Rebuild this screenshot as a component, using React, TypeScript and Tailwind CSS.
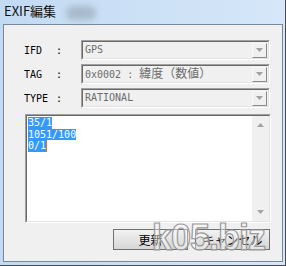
const mono = "font-['DejaVu_Sans_Mono','Noto_Sans_CJK_JP',monospace]";

function Combo({ children }: { children: React.ReactNode }) {
  return (
    <div className="flex h-[20px] w-[189px] border border-t-[#a0a0a0] border-l-[#a0a0a0] border-r-white border-b-white">
      <div className="flex flex-1 items-center border border-t-[#696969] border-l-[#696969] border-r-[#e3e3e3] border-b-[#e3e3e3] bg-[#f0f0f0] pl-[2px] pr-[1px]">
        <span className={`flex-1 text-[10px] leading-none text-[#6d6d6d] ${mono}`}>{children}</span>
        <div className="flex h-[15px] w-[15px] items-center justify-center border border-t-[#f8f8f8] border-l-[#f8f8f8] border-r-[#8a8a8a] border-b-[#8a8a8a] bg-[#f0f0f0]">
          <svg width="7" height="4" viewBox="0 0 7 4">
            <path d="M0 0h7L3.5 4z" fill="#a0a0a0" />
          </svg>
        </div>
      </div>
    </div>
  );
}

function Row({ label, children }: { label: string; children: React.ReactNode }) {
  return (
    <div className="flex h-[20px] items-center">
      <span className={`w-[33px] pl-[1px] text-[10px] text-black ${mono}`}>{label}</span>
      <span className={`w-[25px] text-[10px] text-black ${mono}`}>:</span>
      <Combo>{children}</Combo>
    </div>
  );
}

function Button({ children }: { children: React.ReactNode }) {
  return (
    <button className="flex h-[21px] w-[75px] items-center justify-center border border-[#707070] bg-gradient-to-b from-[#f2f2f2] to-[#d6d6d6] text-[12px] leading-none text-black font-['Noto_Sans_CJK_JP',sans-serif]">
      {children}
    </button>
  );
}

export default function App() {
  return (
    <div className="relative flex h-[266px] w-[286px] flex-col overflow-hidden border-r border-b border-[#4a4a4a] bg-gradient-to-r from-[#c2daf2] to-[#d6e7f9] pl-[3px] pr-[2px] pb-[3px]">
      <div className="flex h-[24px] items-center pl-[1px] pb-[3px] text-[13px] text-[#111] font-['Noto_Sans_CJK_JP',sans-serif]">
        EXIF編集
      </div>
      <div className="pointer-events-none absolute left-[66px] top-[6px] h-[14px] w-[30px] rounded-full bg-[#8a97a6]/50 blur-[3px]" />
      <div className="flex flex-1 flex-col border border-[#76889a] bg-[#f0f0f0] pl-[19px] pt-[15px]">
        <div className="flex flex-col gap-[4px]">
          <Row label="IFD">GPS</Row>
          <Row label="TAG">
            0x0002 : <span className="text-[12px]">緯度（数値）</span>
          </Row>
          <Row label="TYPE">RATIONAL</Row>
        </div>
        <div className="ml-[2px] mt-[6px] flex h-[109px] w-[246px] border border-t-[#a0a0a0] border-l-[#a0a0a0] border-r-white border-b-white">
          <div className="flex flex-1 border border-t-[#696969] border-l-[#696969] border-r-[#e3e3e3] border-b-[#e3e3e3] bg-white">
            <div className={`flex flex-1 flex-col items-start pl-[1px] pt-[1px] text-[10px] leading-[11.5px] text-white ${mono}`}>
              <span className="bg-[#3399ff]">35/1</span>
              <span className="bg-[#3399ff]">1051/100</span>
              <span className="flex items-center">
                <span className="bg-[#3399ff]">0/1</span>
                <span className="h-[12px] w-[1px] bg-[#e07020]" />
              </span>
            </div>
            <div className="flex w-[17px] flex-col items-center justify-between bg-[#f0f0f0] py-[7px]">
              <svg width="7" height="4" viewBox="0 0 7 4">
                <path d="M3.5 0L7 4H0z" fill="#a3a3a3" />
              </svg>
              <svg width="7" height="4" viewBox="0 0 7 4">
                <path d="M0 0h7L3.5 4z" fill="#a3a3a3" />
              </svg>
            </div>
          </div>
        </div>
        <div className="mt-[6px] flex gap-[7px] pl-[90px]">
          <Button>更新</Button>
          <Button>キャンセル</Button>
        </div>
      </div>
      <div className="pointer-events-none absolute left-[152px] top-[220px] text-[36px] font-bold leading-none tracking-[-1px] text-white/40 [-webkit-text-stroke:1.2px_#9a9a9a] font-['Liberation_Sans',sans-serif]">
        k05.biz
      </div>
    </div>
  );
}
